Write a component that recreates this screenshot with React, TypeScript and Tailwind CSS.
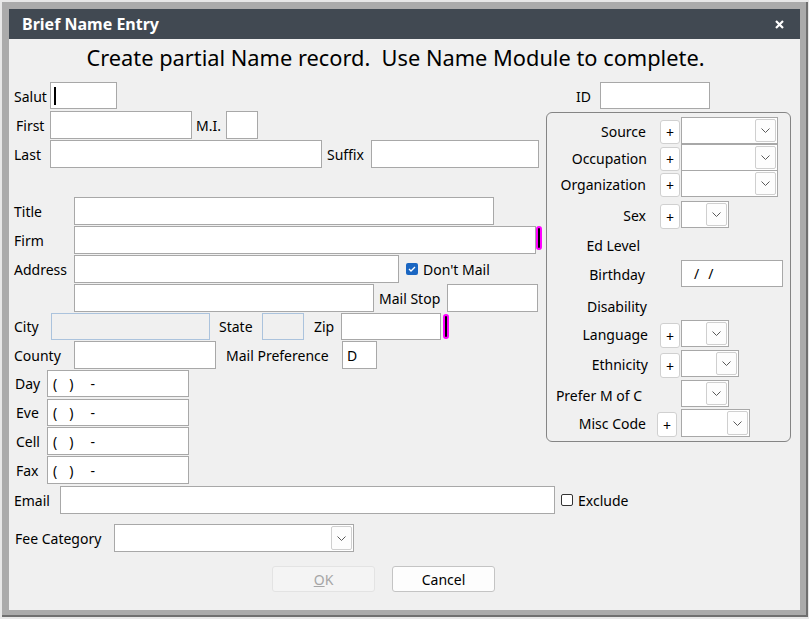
import React from "react";

function Box({ cls, children }: { cls: string; children?: React.ReactNode }) {
  return (
    <div className={"shrink-0 border border-[#a8a8a8] bg-white flex items-center " + cls}>
      {children}
    </div>
  );
}

function Chevron() {
  return (
    <svg width="9" height="5" viewBox="0 0 9 5">
      <path d="M0.5 0.5 L4.5 4.5 L8.5 0.5" fill="none" stroke="#5a5a5a" strokeWidth="1" />
    </svg>
  );
}

function Combo({ cls }: { cls: string }) {
  return (
    <div className={"shrink-0 border border-[#a8a8a8] bg-white flex justify-end p-[1px] " + cls}>
      <div className="w-[21px] h-full border border-[#cfcfcf] rounded-[2px] bg-[#fdfdfd] flex items-center justify-center">
        <Chevron />
      </div>
    </div>
  );
}

function Plus({ cls = "" }: { cls?: string }) {
  return (
    <div
      className={
        "shrink-0 self-start mt-[3px] w-[20px] h-[24px] bg-white border border-[#d0d0d0] rounded-[3px] flex items-center justify-center text-[14px] leading-none pt-[2px] " +
        cls
      }
    >
      +
    </div>
  );
}

function Magenta({ cls = "" }: { cls?: string }) {
  return (
    <div className={"shrink-0 self-start w-[6px] h-[24px] rounded-full bg-black border-2 border-[#ff00ff] " + cls} />
  );
}

function Phone() {
  return (
    <div className="flex items-center pl-[5px] text-[14px] whitespace-pre">
      <span>(</span>
      <span className="ml-[12px]">)</span>
      <span className="ml-[17px]">-</span>
    </div>
  );
}

export default function App() {
  return (
    <div
      className="w-[809px] h-[619px] bg-[#e8e8e8] pt-[2px] pl-[2px] pr-[1px] pb-[2px] text-black"
      style={{ fontFamily: '"Noto Sans", "Open Sans", sans-serif' }}
    >
      <div className="w-full h-full bg-[#ababab] border-r-2 border-b-2 border-[#707070] pl-[7px] pt-[7px] pr-[6px] pb-[5px]">
        <div className="w-full h-full bg-[#f0f0f0] flex flex-col">
          {/* Title bar */}
          <div className="h-[30px] bg-[#414952] flex items-center justify-between pl-[13px] pr-[16px] shrink-0">
            <span className="text-white font-bold text-[16px]">Brief Name Entry</span>
            <svg width="9" height="9" viewBox="0 0 9 9">
              <path d="M1 1 L8 8 M8 1 L1 8" stroke="#ffffff" strokeWidth="2.2" />
            </svg>
          </div>

          {/* Heading */}
          <div className="mt-[4px] h-[30px] flex items-center justify-center pr-[18px] text-[21.8px] whitespace-pre shrink-0">
            Create partial Name record.  Use Name Module to complete.
          </div>

          {/* Top section */}
          <div className="mt-[9px] flex text-[14px]">
            {/* Left column */}
            <div className="w-[537px] shrink-0 flex flex-col">
              {/* Salut */}
              <div className="h-[27px] flex items-center pl-[5px]">
                <span className="w-[36px] shrink-0 mt-[1px]">Salut</span>
                <Box cls="w-[67px] h-[27px] pl-[3px]">
                  <div className="w-[2px] h-[18px] bg-black" />
                </Box>
              </div>
              {/* First */}
              <div className="mt-[2px] h-[28px] flex items-center pl-[7px]">
                <span className="w-[34px] shrink-0">First</span>
                <Box cls="w-[142px] h-[28px]" />
                <span className="ml-[4px] w-[30px] shrink-0">M.I.</span>
                <Box cls="w-[32px] h-[28px]" />
              </div>
              {/* Last */}
              <div className="mt-[1px] h-[28px] flex items-center pl-[5px]">
                <span className="w-[36px] shrink-0">Last</span>
                <Box cls="w-[272px] h-[28px]" />
                <span className="ml-[5px] w-[44px] shrink-0">Suffix</span>
                <Box cls="w-[168px] h-[28px]" />
              </div>
              {/* Title */}
              <div className="mt-[29px] h-[28px] flex items-center pl-[5px]">
                <span className="w-[60px] shrink-0">Title</span>
                <Box cls="w-[420px] h-[28px]" />
              </div>
              {/* Firm */}
              <div className="mt-[1px] h-[28px] flex items-center pl-[5px]">
                <span className="w-[60px] shrink-0">Firm</span>
                <Box cls="w-[462px] h-[28px]" />
                <Magenta />
              </div>
              {/* Address */}
              <div className="mt-[1px] h-[28px] flex items-center pl-[5px]">
                <span className="w-[60px] shrink-0">Address</span>
                <Box cls="w-[325px] h-[28px]" />
                <div className="ml-[7px] w-[12px] h-[12px] rounded-[2px] bg-[#1a66c2] flex items-center justify-center shrink-0">
                  <svg width="8" height="6" viewBox="0 0 8 6">
                    <path d="M1 3 L3 5 L7 1" fill="none" stroke="#ffffff" strokeWidth="1.3" />
                  </svg>
                </div>
                <span className="ml-[5px]">Don't Mail</span>
              </div>
              {/* Address 2 */}
              <div className="mt-[1px] h-[28px] flex items-center pl-[65px]">
                <Box cls="w-[300px] h-[28px]" />
                <span className="ml-[5px] w-[68px] shrink-0">Mail Stop</span>
                <Box cls="w-[91px] h-[28px]" />
              </div>
              {/* City */}
              <div className="mt-[1px] h-[27px] flex items-center pl-[5px]">
                <span className="w-[37px] shrink-0">City</span>
                <div className="shrink-0 w-[159px] h-[27px] border border-[#abc3dd] bg-[#f0f0f0]" />
                <span className="ml-[9px] w-[43px] shrink-0">State</span>
                <div className="shrink-0 w-[42px] h-[27px] border border-[#abc3dd] bg-[#f0f0f0]" />
                <span className="ml-[10px] w-[27px] shrink-0">Zip</span>
                <Box cls="w-[100px] h-[27px]" />
                <Magenta cls="ml-[2px] mt-[1px] h-[25px]" />
              </div>
              {/* County */}
              <div className="mt-[1px] h-[28px] flex items-center pl-[5px]">
                <span className="w-[60px] shrink-0">County</span>
                <Box cls="w-[142px] h-[28px]" />
                <span className="ml-[10px] w-[116px] shrink-0">Mail Preference</span>
                <Box cls="w-[35px] h-[28px] pl-[4px]">D</Box>
              </div>
              {/* Day */}
              <div className="mt-[1px] h-[27px] flex items-center pl-[6px]">
                <span className="w-[32px] shrink-0">Day</span>
                <Box cls="w-[142px] h-[27px]">
                  <Phone />
                </Box>
              </div>
              {/* Eve */}
              <div className="mt-[2px] h-[27px] flex items-center pl-[7px]">
                <span className="w-[31px] shrink-0">Eve</span>
                <Box cls="w-[142px] h-[27px]">
                  <Phone />
                </Box>
              </div>
              {/* Cell */}
              <div className="mt-[1px] h-[28px] flex items-center pl-[7px]">
                <span className="w-[31px] shrink-0">Cell</span>
                <Box cls="w-[142px] h-[28px]">
                  <Phone />
                </Box>
              </div>
              {/* Fax */}
              <div className="mt-[1px] h-[28px] flex items-center pl-[7px]">
                <span className="w-[31px] shrink-0">Fax</span>
                <Box cls="w-[142px] h-[28px]">
                  <Phone />
                </Box>
              </div>
            </div>

            {/* Right column */}
            <div className="w-[245px] shrink-0 flex flex-col">
              <div className="h-[27px] flex items-center pl-[30px]">
                <span className="w-[24px] shrink-0 mt-[1px]">ID</span>
                <Box cls="w-[110px] h-[27px]" />
              </div>
              <div className="mt-[3px] h-[330px] w-[245px] border border-[#858585] rounded-[6px] pt-[4px] flex flex-col">
                {/* Source */}
                <div className="h-[27px] flex items-center">
                  <span className="w-[100px] pr-[1px] text-right shrink-0 mt-[2px]">Source</span>
                  <Plus cls="ml-[13px]" />
                  <Combo cls="ml-[1px] w-[97px] h-[27px]" />
                </div>
                {/* Occupation */}
                <div className="h-[27px] flex items-center">
                  <span className="w-[100px] text-right shrink-0 mt-[2px]">Occupation</span>
                  <Plus cls="ml-[13px]" />
                  <Combo cls="ml-[1px] w-[97px] h-[27px]" />
                </div>
                {/* Organization */}
                <div className="-mt-px h-[27px] flex items-center">
                  <span className="w-[100px] pr-[1px] text-right shrink-0 mt-[2px]">Organization</span>
                  <Plus cls="ml-[13px]" />
                  <Combo cls="ml-[1px] w-[97px] h-[27px]" />
                </div>
                {/* Sex */}
                <div className="mt-[4px] h-[27px] flex items-center">
                  <span className="w-[100px] pr-[1px] text-right shrink-0 mt-[2px]">Sex</span>
                  <Plus cls="ml-[13px] mt-[2px] h-[25px]" />
                  <Combo cls="ml-[1px] w-[48px] h-[27px]" />
                </div>
                {/* Ed Level */}
                <div className="h-[32px] flex items-center">
                  <span className="w-[100px] pr-[7px] text-right shrink-0 mt-[2px]">Ed Level</span>
                </div>
                {/* Birthday */}
                <div className="h-[27px] flex items-center">
                  <span className="w-[100px] pr-[2px] text-right shrink-0 mt-[2px]">Birthday</span>
                  <Box cls="ml-[34px] w-[102px] h-[27px] pl-[12px] whitespace-pre">
                    <span>/</span>
                    <span className="ml-[9px]">/</span>
                  </Box>
                </div>
                {/* Disability */}
                <div className="h-[33px] flex items-center">
                  <span className="w-[100px] text-right shrink-0 mt-[6px]">Disability</span>
                </div>
                {/* Language */}
                <div className="h-[27px] flex items-center">
                  <span className="w-[101px] text-right shrink-0 mt-[1px]">Language</span>
                  <Plus cls="ml-[12px] h-[25px]" />
                  <Combo cls="ml-[1px] w-[48px] h-[27px]" />
                </div>
                {/* Ethnicity */}
                <div className="mt-[3px] h-[27px] flex items-center">
                  <span className="w-[101px] text-right shrink-0 mt-[1px]">Ethnicity</span>
                  <Plus cls="ml-[12px] h-[25px]" />
                  <Combo cls="ml-[1px] w-[58px] h-[27px]" />
                </div>
                {/* Prefer M of C */}
                <div className="mt-[3px] h-[27px] flex items-center">
                  <span className="w-[100px] pr-[5px] text-right shrink-0 mt-[4px]">Prefer M of C</span>
                  <Combo cls="ml-[34px] w-[48px] h-[27px]" />
                </div>
                {/* Misc Code */}
                <div className="mt-[2px] h-[28px] flex items-center">
                  <span className="w-[100px] pr-[1px] text-right shrink-0">Misc Code</span>
                  <Plus cls="ml-[10px] h-[25px]" />
                  <Combo cls="ml-[4px] w-[69px] h-[28px]" />
                </div>
              </div>
            </div>
          </div>

          {/* Email */}
          <div className="mt-[2px] h-[28px] flex items-center pl-[5px] text-[14px]">
            <span className="w-[46px] shrink-0">Email</span>
            <Box cls="w-[495px] h-[28px]" />
            <div className="ml-[6px] w-[12px] h-[12px] border border-[#333333] rounded-[2px] bg-white shrink-0" />
            <span className="ml-[5px]">Exclude</span>
          </div>

          {/* Fee Category */}
          <div className="mt-[10px] h-[28px] flex items-center pl-[6px] text-[14px]">
            <span className="w-[99px] shrink-0">Fee Category</span>
            <Combo cls="w-[240px] h-[28px]" />
          </div>

          {/* Buttons */}
          <div className="mt-[14px] h-[26px] flex items-center pl-[263px] text-[14px]">
            <div className="w-[103px] h-[26px] border border-[#e3e3e3] rounded-[3px] bg-[#f4f4f4] text-[#a6a6a6] flex items-center justify-center">
              <span>
                <span className="underline">O</span>K
              </span>
            </div>
            <div className="ml-[17px] w-[103px] h-[26px] border border-[#c4c4c4] rounded-[3px] bg-[#fdfdfd] flex items-center justify-center">
              Cancel
            </div>
          </div>
        </div>
      </div>
    </div>
  );
}
